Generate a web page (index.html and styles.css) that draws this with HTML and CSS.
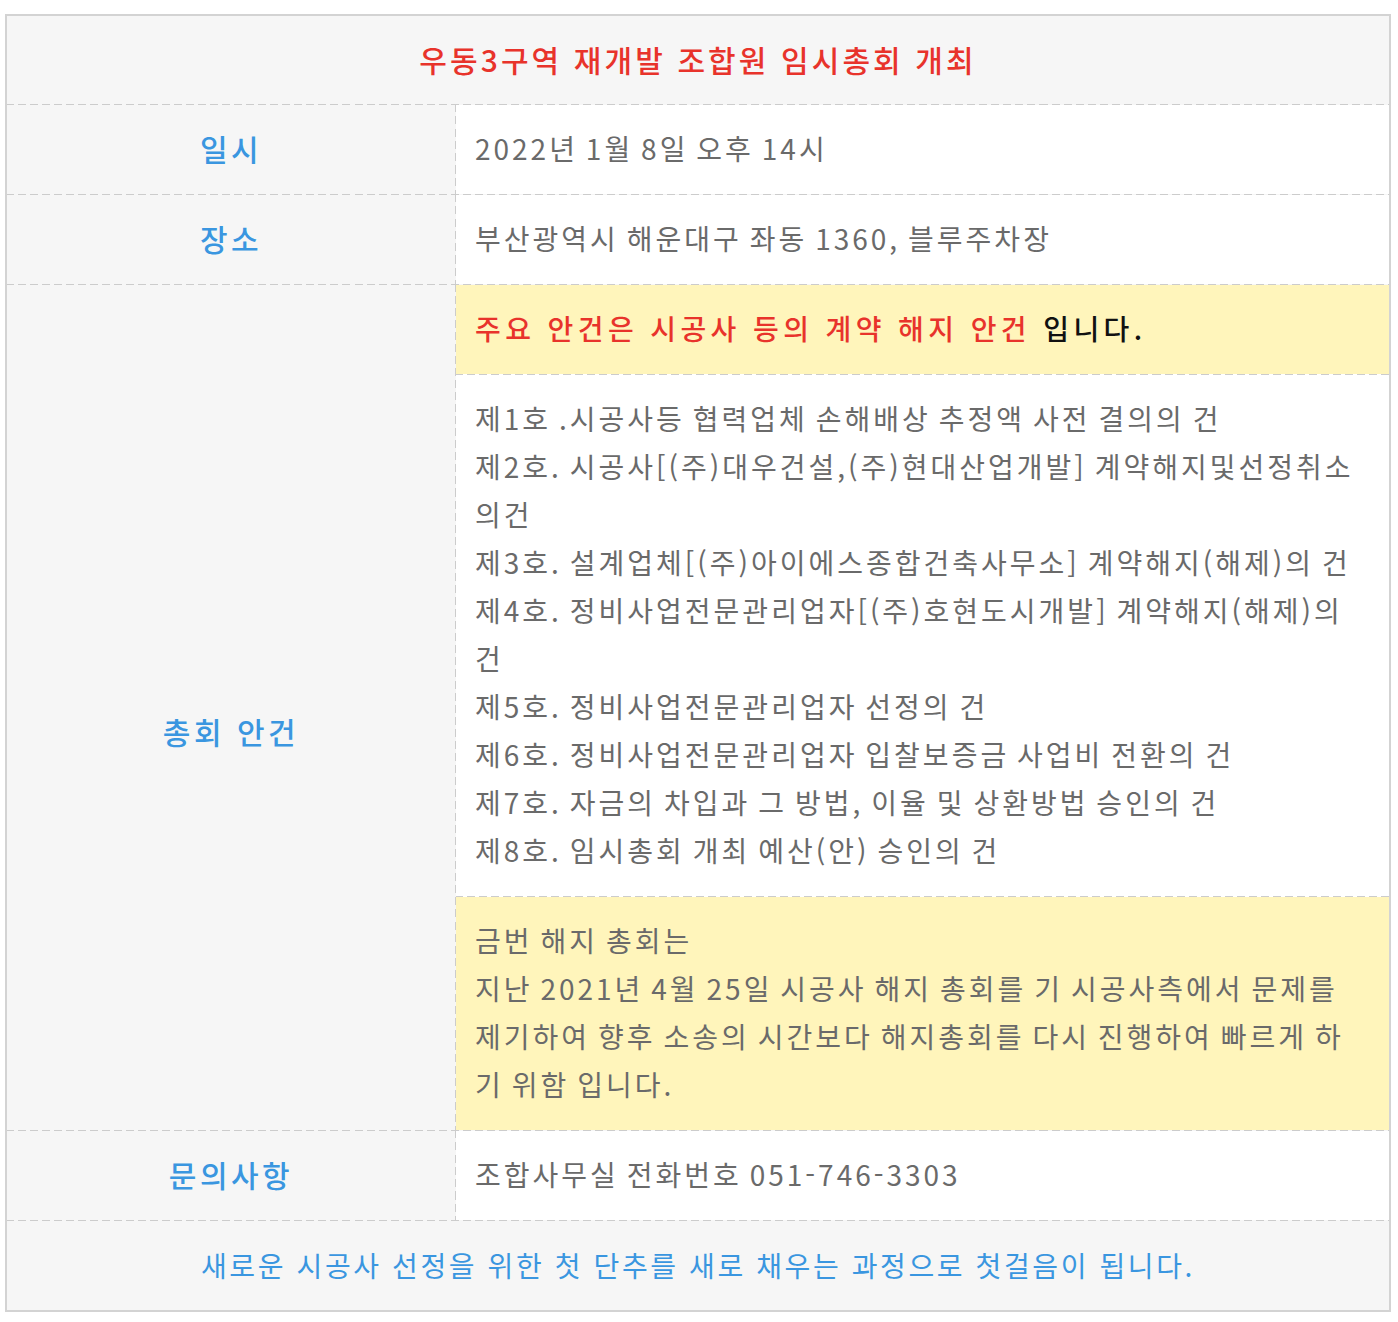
FILE: index.html
```html
<!DOCTYPE html>
<html lang="ko">
<head>
<meta charset="utf-8">
<title>우동3구역 재개발 조합원 임시총회 개최</title>
<link rel="stylesheet" href="styles.css">
</head>
<body>
<div class="page">
  <div class="board">
    <div class="title">우동3구역 재개발 조합원 임시총회 개최</div>
    <div class="row">
      <div class="label">일시</div>
      <div class="value"><div class="cell">2022년 1월 8일 오후 14시</div></div>
    </div>
    <div class="row">
      <div class="label">장소</div>
      <div class="value"><div class="cell">부산광역시 해운대구 좌동 1360, 블루주차장</div></div>
    </div>
    <div class="row">
      <div class="label label-agenda">총회 안건</div>
      <div class="value stack">
        <div class="cell note emph"><span class="red">주요 안건은 시공사 등의 계약 해지 안건</span> 입니다.</div>
        <div class="cell list">
          <div>제1호 .시공사등 협력업체 손해배상 추정액 사전 결의의 건</div>
          <div>제2호. 시공사[(주)대우건설,(주)현대산업개발] 계약해지및선정취소의건</div>
          <div>제3호. 설계업체[(주)아이에스종합건축사무소] 계약해지(해제)의 건</div>
          <div>제4호. 정비사업전문관리업자[(주)호현도시개발] 계약해지(해제)의 건</div>
          <div>제5호. 정비사업전문관리업자 선정의 건</div>
          <div>제6호. 정비사업전문관리업자 입찰보증금 사업비 전환의 건</div>
          <div>제7호. 자금의 차입과 그 방법, 이율 및 상환방법 승인의 건</div>
          <div>제8호. 임시총회 개최 예산(안) 승인의 건</div>
        </div>
        <div class="cell note">금번 해지 총회는<br>지난 2021년 4월 25일 시공사 해지 총회를 기 시공사측에서 문제를 제기하여 향후 소송의 시간보다 해지총회를 다시 진행하여 빠르게 하기 위함 입니다.</div>
      </div>
    </div>
    <div class="row">
      <div class="label">문의사항</div>
      <div class="value"><div class="cell">조합사무실 전화번호 051-746-3303</div></div>
    </div>
    <div class="footer">새로운 시공사 선정을 위한 첫 단추를 새로 채우는 과정으로 첫걸음이 됩니다.</div>
  </div>
</div>
</body>
</html>
```

FILE: styles.css
```css
html, body {
  margin: 0;
  padding: 0;
  background: #ffffff;
}

.page {
  padding: 14px 0 0 5px;
}

.board {
  width: 1386px;
  box-sizing: border-box;
  border: 2px solid #d3d3d3;
  background: #f6f6f6;
  font-family: "Noto Sans CJK KR", "Noto Sans", sans-serif;
}

.title,
.row,
.list {
  border-image: repeating-linear-gradient(90deg, #cccccc 0 8px, transparent 8px 12px) 1;
}

.title {
  display: flex;
  align-items: center;
  justify-content: center;
  border-bottom: 1px solid #cccccc;
  color: #e8332b;
  font-size: 30px;
  font-weight: 500;
  letter-spacing: 3.1px;
  padding-bottom: 3px;
  box-sizing: border-box;
  height: 89px;
}

.row {
  display: grid;
  grid-template-columns: 449px 1fr;
  border-bottom: 1px solid #cccccc;
}

.label {
  display: flex;
  align-items: center;
  justify-content: center;
  border-right: 1px solid #cccccc;
  border-image: repeating-linear-gradient(180deg, #cccccc 0 8px, transparent 8px 12px) 1;
  color: #3a96e0;
  font-size: 30px;
  font-weight: 500;
  letter-spacing: 3.5px;
  padding-bottom: 3px;
}

.label-agenda {
  padding-top: 46px;
  padding-bottom: 0;
}

.value {
  background: #ffffff;
  display: flex;
  flex-direction: column;
}

.cell {
  padding: 19px 29px 22px 19px;
  font-size: 28px;
  line-height: 48px;
  color: #6a6a6a;
  letter-spacing: 3px;
  word-spacing: -2.9px;
}

.note {
  background: #fff5bb;
}

.emph {
  color: #111111;
  font-weight: 500;
  letter-spacing: 4.4px;
  word-spacing: 0;
}

.red {
  color: #e8332b;
}

.list {
  border-top: 1px solid #cccccc;
  border-bottom: 1px solid #cccccc;
  padding-top: 19px;
  padding-bottom: 22px;
}

.footer {
  height: 89px;
  display: flex;
  align-items: center;
  justify-content: center;
  color: #3a96e0;
  font-size: 28px;
  letter-spacing: 2.6px;
  padding-bottom: 2px;
  box-sizing: border-box;
}
```
